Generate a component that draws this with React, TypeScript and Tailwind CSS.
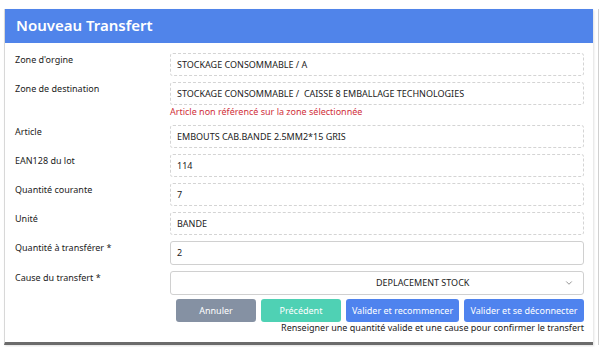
import { ChevronDown } from 'lucide-react';

interface Field {
  label: string;
  value: string;
  dashed?: boolean;
  error?: string;
}

const fields: Field[] = [
  { label: "Zone d'orgine", value: 'STOCKAGE CONSOMMABLE / A', dashed: true },
  {
    label: 'Zone de destination',
    value: 'STOCKAGE CONSOMMABLE /\u00a0 CAISSE 8 EMBALLAGE TECHNOLOGIES',
    dashed: true,
    error: 'Article non référencé sur la zone sélectionnée',
  },
  { label: 'Article', value: 'EMBOUTS CAB.BANDE 2.5MM2*15 GRIS', dashed: true },
  { label: 'EAN128 du lot', value: '114', dashed: true },
  { label: 'Quantité courante', value: '7', dashed: true },
  { label: 'Unité', value: 'BANDE', dashed: true },
  { label: 'Quantité à transférer *', value: '2' },
];

function FieldRow({ field }: { field: Field }) {
  return (
    <div className="flex">
      <div className="w-[155px] shrink-0 leading-[14px] text-[9px] text-[#222]">{field.label}</div>
      <div className="flex-1">
        <div
          className={`flex items-center px-[6px] text-[9px] text-[#222] rounded-[3px] ${
            field.dashed ? 'h-[23px] border border-dashed border-[#d4d4d4]' : 'h-[24px] border border-[#d0d0d0]'
          }`}
        >
          {field.value}
        </div>
        {field.error && <div className="text-[9px] text-[#d0303a] leading-[14px]">{field.error}</div>}
      </div>
    </div>
  );
}

export default function App() {
  return (
    <div
      className="w-[602px] h-[347px] bg-white pt-[9px] pl-[4px] flex"
      style={{ fontFamily: '"Noto Sans", "Open Sans", sans-serif' }}
    >
      <div className="w-[589px] h-[336px] shrink-0 border-l border-[#d8d8d8] border-b-[3px] border-b-[#6b6b6b] shadow-[1px_1px_2px_rgba(0,0,0,0.12)] flex flex-col">
        <div className="h-[34px] shrink-0 bg-[#5084ea] flex items-center pl-[11px] pb-[1px] text-white text-[15px] font-semibold">
          Nouveau Transfert
        </div>
        <div className="flex-1 pl-[10px] pr-[9px] pt-[10px] flex flex-col gap-[6px]">
          {fields.map((f) => (
            <FieldRow key={f.label} field={f} />
          ))}
          <div className="flex">
            <div className="w-[155px] shrink-0 leading-[14px] text-[9px] text-[#222]">Cause du transfert *</div>
            <div className="flex-1 h-[24px] border border-[#d0d0d0] rounded-[3px] flex items-center pl-[205px] pr-[9px] text-[9px] text-[#222]">
              <span className="flex-1">DEPLACEMENT STOCK</span>
              <ChevronDown size={10} strokeWidth={1.5} className="text-[#555]" />
            </div>
          </div>
          <div className="flex flex-col items-end -mt-[2px]">
            <div className="flex gap-[5px] text-[9px] text-white">
              <button className="w-[80px] h-[23px] rounded-[3px] bg-[#8591a3]">Annuler</button>
              <button className="w-[80px] h-[23px] rounded-[3px] bg-[#4fd1b4]">Précédent</button>
              <button className="w-[113px] h-[23px] rounded-[3px] bg-[#4f83ee]">Valider et recommencer</button>
              <button className="w-[120px] h-[23px] rounded-[3px] bg-[#4f83ee]">Valider et se déconnecter</button>
            </div>
            <div className="text-[9px] leading-[12px] text-[#222]">
              Renseigner une quantité valide et une cause pour confirmer le transfert
            </div>
          </div>
        </div>
      </div>
      <div className="ml-[5px] w-[1px] h-[336px] bg-[#d0d0d0]" />
    </div>
  );
}
